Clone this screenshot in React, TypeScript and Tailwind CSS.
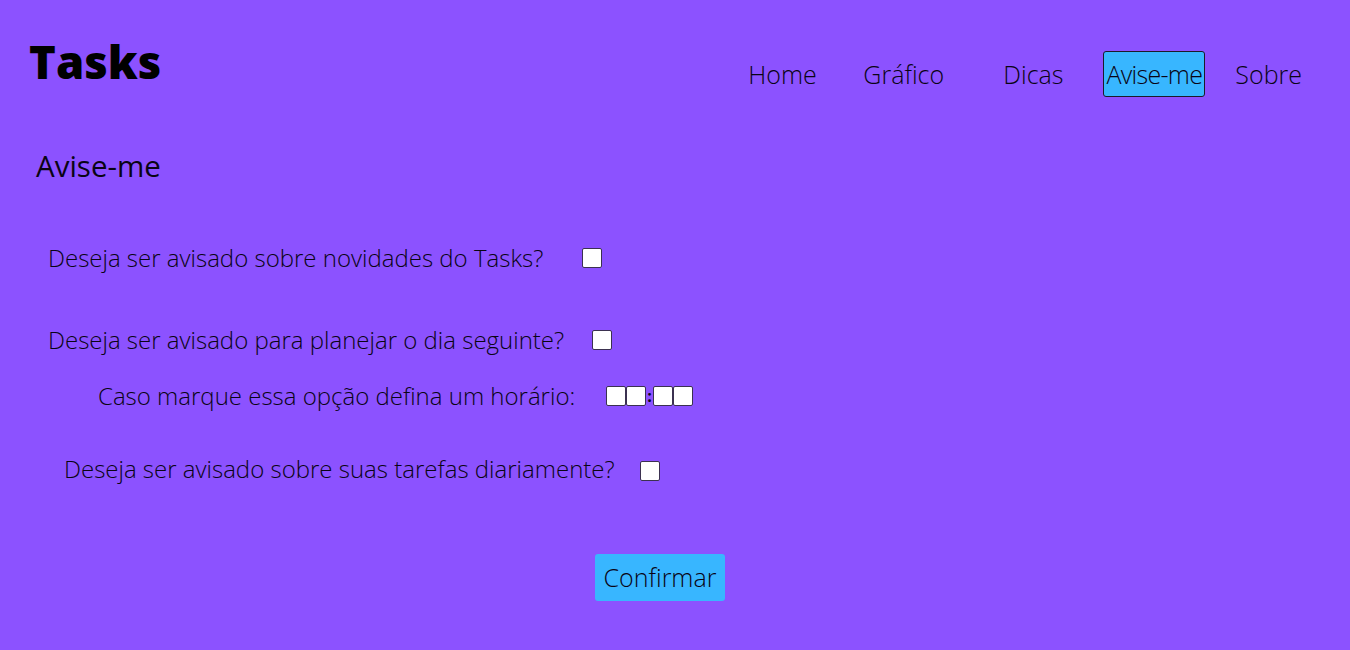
import React from "react";

const font = { fontFamily: '"Open Sans", "Noto Sans", sans-serif' };

function Box({ className = "" }: { className?: string }) {
  return (
    <span
      className={`inline-block w-[20px] h-[20px] bg-white border border-[#3b3150] rounded-[2px] ${className}`}
    />
  );
}

export default function App() {
  return (
    <div
      className="w-[1350px] h-[650px] bg-[#8c52ff] text-[#0a0414] overflow-hidden"
      style={font}
    >
      <header className="flex items-start h-[97px]">
        <h1 className="ml-[29px] mt-[38px] text-[45.5px] leading-[46px] font-extrabold text-black">
          Tasks
        </h1>
        <nav className="ml-auto mr-[48px] mt-[51px] h-[46px] flex items-center text-[25px] font-light">
          <a className="w-[115px] pt-[2px]">Home</a>
          <a className="w-[140px] pt-[2px]">Gráfico</a>
          <a className="w-[100px] pt-[2px]">Dicas</a>
          <a className="h-[46px] w-[102px] pt-[2px] flex items-center justify-center bg-[#38b6ff] border border-[#1b1b2b] rounded-[3px] tracking-[-0.7px]">
            Avise-me
          </a>
          <a className="ml-[30px] pt-[2px]">Sobre</a>
        </nav>
      </header>

      <h2 className="ml-[36px] mt-[54px] text-[29.5px] leading-[30px] font-normal">
        Avise-me
      </h2>

      <div className="text-[24px] font-light">
        <div className="ml-[48px] mt-[62px] h-[30px] flex items-center">
          <span>Deseja ser avisado sobre novidades do Tasks?</span>
          <Box className="ml-[39px]" />
        </div>
        <div className="ml-[48px] mt-[52px] h-[30px] flex items-center">
          <span>Deseja ser avisado para planejar o dia seguinte?</span>
          <Box className="ml-[28px]" />
        </div>
        <div className="ml-[98px] mt-[26px] h-[30px] flex items-center">
          <span>Caso marque essa opção defina um horário:</span>
          <span className="ml-[31px] flex items-center">
            <Box />
            <Box />
            <span className="text-[16px] font-bold leading-none mx-[1px]">:</span>
            <Box />
            <Box />
          </span>
        </div>
        <div className="ml-[64px] mt-[43px] h-[30px] flex items-center">
          <span>Deseja ser avisado sobre suas tarefas diariamente?</span>
          <Box className="ml-[25px] mt-[3px]" />
        </div>
        <div className="mt-[70px] flex">
          <button className="ml-[595px] w-[130px] h-[47px] bg-[#38b6ff] rounded-[3px] flex items-center justify-center text-[25px] font-light">
            Confirmar
          </button>
        </div>
      </div>
    </div>
  );
}
